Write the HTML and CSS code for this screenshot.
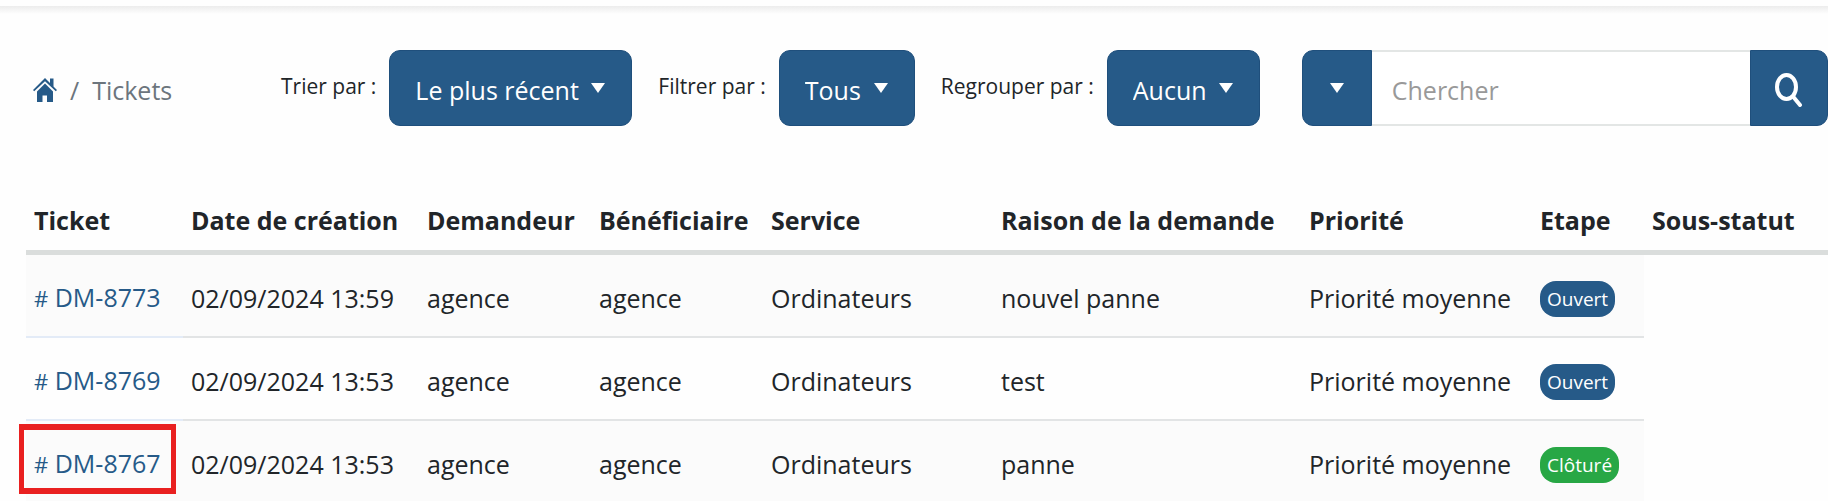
FILE: index.html
```html
<!DOCTYPE html>
<html lang="fr">

<head>
    <meta charset="UTF-8">
    <meta name="viewport" content="width=device-width, initial-scale=1.0">
    <title>Tickets</title>
    <link rel="stylesheet" href="styles.css">
</head>

<body>
    <div class="top-line"></div>
    <div class="toolbar">
        <nav class="breadcrumb">
            <a href="#" aria-label="Accueil">
                <svg class="home" viewBox="0 0 24 24" preserveAspectRatio="none">
                    <path d="M12 5.500L4 13.500V24h5.500v-6.500h4.500v6.500H20v-10.500z" />
                    <path d="M12 0L0 12l1.200 1.300L12 3.200 22.800 13.300l1.200-1.300-3.500-3.500V0.500h-3.500v4.500z" />
                </svg>
            </a>
            <span class="sep">/</span>
            <span>Tickets</span>
        </nav>
        <div class="filter">
            <label for="sort">Trier par :</label>
            <div class="dropdown">
                <select id="sort">
                    <option>Le plus récent</option>
                </select>
                <svg class="caret" viewBox="0 0 14 10" preserveAspectRatio="none"><path d="M0 0h14L7 10z" /></svg>
            </div>
        </div>
        <div class="filter">
            <label for="status">Filtrer par :</label>
            <div class="dropdown">
                <select id="status">
                    <option>Tous</option>
                </select>
                <svg class="caret" viewBox="0 0 14 10" preserveAspectRatio="none"><path d="M0 0h14L7 10z" /></svg>
            </div>
        </div>
        <div class="filter">
            <label for="group">Regrouper par :</label>
            <div class="dropdown">
                <select id="group">
                    <option>Aucun</option>
                </select>
                <svg class="caret" viewBox="0 0 14 10" preserveAspectRatio="none"><path d="M0 0h14L7 10z" /></svg>
            </div>
        </div>
        <form class="search">
            <button type="button" class="search-in" aria-label="Rechercher dans">
                <svg class="caret" viewBox="0 0 14 10" preserveAspectRatio="none"><path d="M0 0h14L7 10z" /></svg>
            </button>
            <input type="text" placeholder="Chercher" aria-label="Chercher">
            <button type="submit" class="search-go" aria-label="Lancer la recherche">
                <svg class="glass" viewBox="0 0 28 34">
                    <ellipse cx="11.500" cy="14" rx="9.500" ry="12" />
                    <path d="M18 23.500l7 8.500" />
                </svg>
            </button>
        </form>
    </div>

    <table class="tickets">
        <colgroup>
            <col class="col-ticket">
            <col class="col-date">
            <col class="col-user">
            <col class="col-user">
            <col class="col-service">
            <col class="col-reason">
            <col class="col-priority">
            <col class="col-stage">
            <col>
        </colgroup>
        <thead>
            <tr>
                <th>Ticket</th>
                <th>Date de création</th>
                <th>Demandeur</th>
                <th>Bénéficiaire</th>
                <th>Service</th>
                <th>Raison de la demande</th>
                <th>Priorité</th>
                <th>Etape</th>
                <th>Sous-statut</th>
            </tr>
        </thead>
        <tbody>
            <tr>
                <td><a href="#"><span class="hash">#</span> DM-8773</a></td>
                <td>02/09/2024 13:59</td>
                <td>agence</td>
                <td>agence</td>
                <td>Ordinateurs</td>
                <td>nouvel panne</td>
                <td>Priorité moyenne</td>
                <td><span class="badge">Ouvert</span></td>
            </tr>
            <tr>
                <td><a href="#"><span class="hash">#</span> DM-8769</a></td>
                <td>02/09/2024 13:53</td>
                <td>agence</td>
                <td>agence</td>
                <td>Ordinateurs</td>
                <td>test</td>
                <td>Priorité moyenne</td>
                <td><span class="badge">Ouvert</span></td>
            </tr>
            <tr>
                <td class="marked"><a href="#"><span class="hash">#</span> DM-8767</a></td>
                <td>02/09/2024 13:53</td>
                <td>agence</td>
                <td>agence</td>
                <td>Ordinateurs</td>
                <td>panne</td>
                <td>Priorité moyenne</td>
                <td><span class="badge closed">Clôturé</span></td>
            </tr>
        </tbody>
    </table>
</body>

</html>
```
FILE: styles.css
```css
* {
    margin: 0;
    padding: 0;
    box-sizing: border-box;
}

body {
    font-family: "Open Sans", "Noto Sans", sans-serif;
    font-size: 25px;
    line-height: 36px;
    color: #212529;
    background-color: #fefefe;
    overflow: hidden;
}

a {
    color: #265a88;
    text-decoration: none;
}

.top-line {
    height: 8px;
    margin-top: 6px;
    background: linear-gradient(#ececec, #fefefe);
}

.toolbar {
    display: flex;
    align-items: center;
    padding: 36px 0 0 33px;
}

.breadcrumb {
    display: flex;
    flex-shrink: 0;
    align-items: center;
    gap: 13px;
    width: 248px;
    padding-top: 4px;
    color: #6c757d;
}

.home {
    display: block;
    width: 24px;
    height: 24px;
    fill: #265a88;
}

.filter {
    display: flex;
    align-items: center;
    margin-right: 26px;
    white-space: nowrap;
}

.filter label {
    margin-right: 13px;
    padding-bottom: 4px;
    font-size: 21px;
}

/* the caret shares the select's grid cell */
.dropdown {
    display: grid;
    align-items: center;
    justify-items: end;
}

.dropdown select,
.dropdown .caret {
    grid-area: 1 / 1;
}

.dropdown select {
    height: 76px;
    padding: 4px 52px 0 25px;
    font: inherit;
    color: #fff;
    background-color: #265a88;
    border: 1px solid #1f4f7c;
    border-radius: 11px;
    appearance: none;
    cursor: pointer;
}

.caret {
    width: 14px;
    height: 10px;
    fill: #fff;
}

.dropdown .caret {
    margin-right: 27px;
    pointer-events: none;
}

.search {
    display: flex;
    flex: 1;
    min-width: 0;
    height: 76px;
    margin-left: 16px;
}

.search button {
    display: flex;
    flex-shrink: 0;
    align-items: center;
    justify-content: center;
    background-color: #265a88;
    border: 1px solid #1f4f7c;
    cursor: pointer;
}

.search .search-in {
    width: 70px;
    border-radius: 11px 0 0 11px;
}

.search .search-go {
    width: 78px;
    padding-top: 4px;
    border-radius: 0 11px 11px 0;
}

.search input {
    flex: 1;
    min-width: 0;
    padding: 4px 20px 0;
    font: inherit;
    background-color: #fff;
    border: 2px solid #e3e6e5;
    border-width: 2px 0;
}

.search input::placeholder {
    color: #999;
}

.glass {
    width: 28px;
    height: 34px;
    fill: none;
    stroke: #fff;
    stroke-width: 4;
    stroke-linecap: round;
}

.tickets {
    width: calc(100% - 26px);
    margin: 63px 0 0 26px;
    table-layout: fixed;
    border-collapse: separate;
    border-spacing: 0;
    text-align: left;
    white-space: nowrap;
}

.col-ticket {
    width: 157px;
}

.col-date {
    width: 236px;
}

.col-user {
    width: 172px;
}

.col-service {
    width: 230px;
}

.col-reason {
    width: 308px;
}

.col-priority {
    width: 231px;
}

.col-stage {
    width: 112px;
}

.tickets th {
    padding: 13px 8px 12px;
    border-bottom: 5px solid #dadddc;
}

.tickets td {
    height: 83px;
    padding: 4px 8px 0;
    border-bottom: 2px solid #e2e4e5;
}

.tickets td:first-child {
    border-bottom-color: #e3ebf7;
}

.tickets tr:nth-child(odd) td {
    background-color: #fbfbfb;
}

.hash {
    font-size: 22px;
}

.badge {
    display: inline-block;
    padding: 0 7px;
    font-size: 19px;
    color: #fff;
    background-color: #265a88;
    border-radius: 16px;
}

.badge.closed {
    background-color: #28a745;
}

/* red frame around the ticket to open */
.marked {
    position: relative;
}

.marked::after {
    content: "";
    position: absolute;
    box-sizing: border-box;
    top: 3px;
    left: -7px;
    width: 157px;
    height: 70px;
    border: 5px solid #e92020;
    border-width: 6px 5px;
}
```
